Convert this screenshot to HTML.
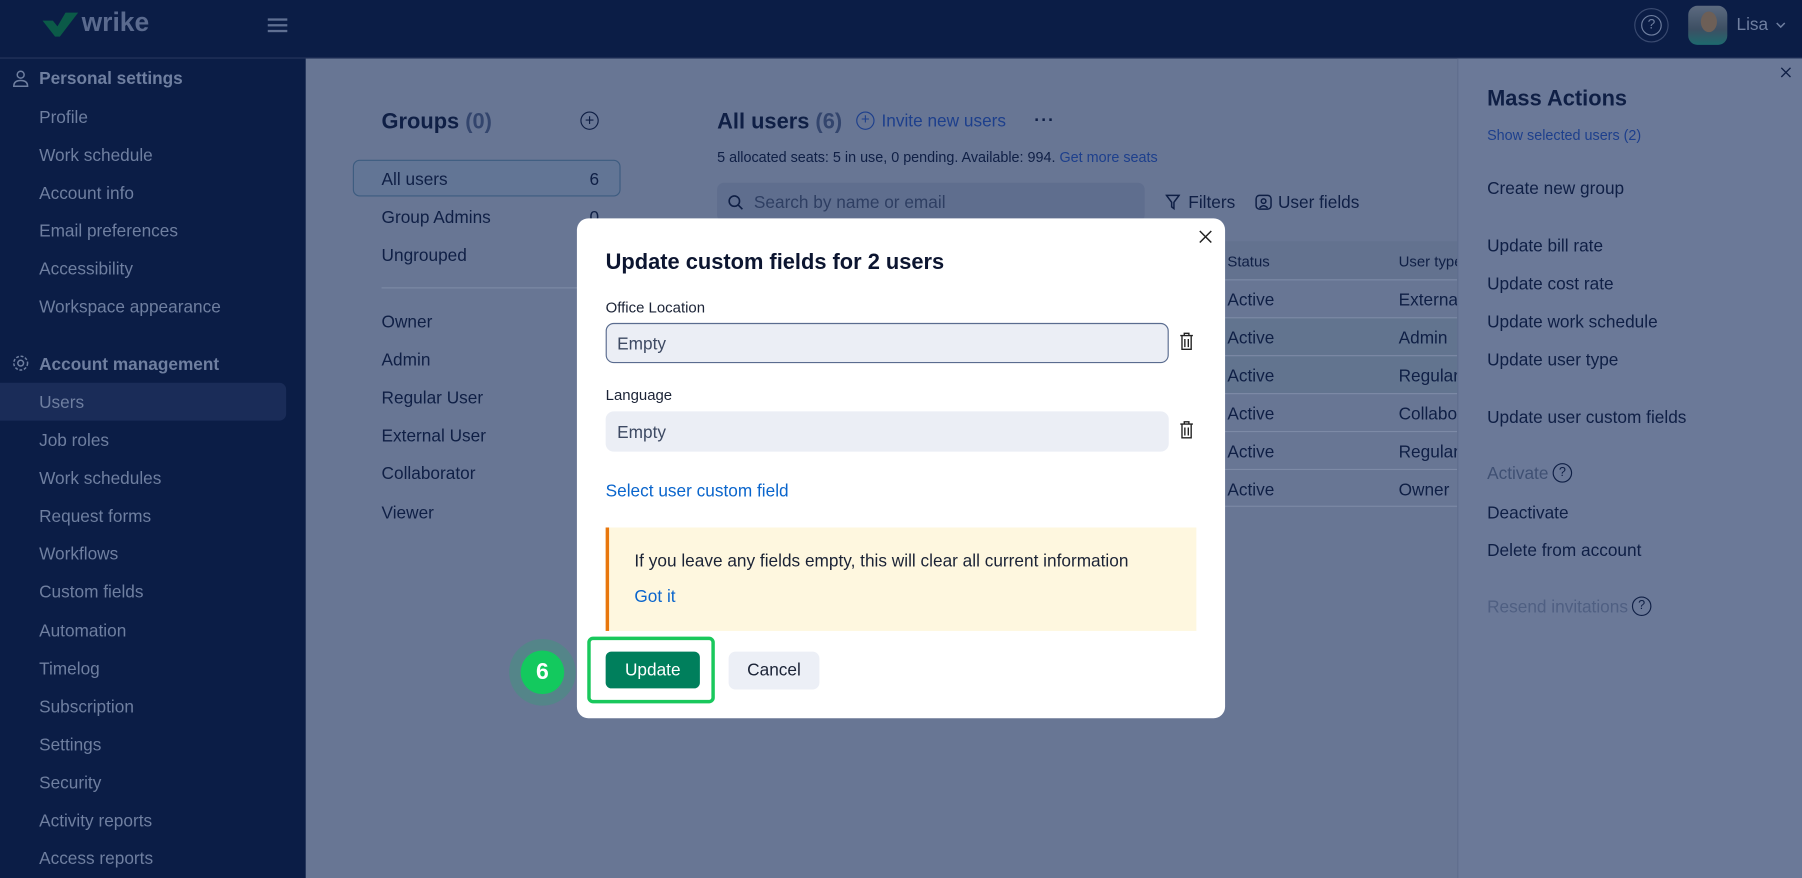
<!DOCTYPE html>
<html><head><meta charset="utf-8"><style>
*{margin:0;padding:0;box-sizing:border-box}
html,body{width:1802px;height:878px;overflow:hidden;background:#0b1d46}
#w{position:absolute;left:0;top:0;width:1568px;height:764px;transform:scale(1.14923);transform-origin:0 0;font-family:"Liberation Sans",sans-serif;background:#0b1d46;overflow:hidden}
.a{position:absolute;white-space:nowrap}
.sb{color:#6f7fa0;font-size:15px}
.m{color:#0f1f45;font-size:15px}
.lnk{color:#1d3f8c}
.row{position:absolute;left:1060px;width:208px;height:33px;border-top:1px solid #7d8aa6}
</style></head><body><div id="w">
<div class="a" style="left:0;top:0;width:1568px;height:51px;background:#0b1d46;border-bottom:1px solid #27375d"></div>
<svg class="a" style="left:37px;top:10px" width="32" height="22" viewBox="0 0 32 22"><path d="M0 8 L9 8 L13 13 L20 1 L31 1 L15 22 L11 22 Z" fill="#0b5a48"/></svg>
<div class="a" style="left:71px;top:6px;font-size:23px;font-weight:bold;color:#5a6a8e">wrike</div>
<div class="a" style="left:233px;top:16px;width:17px;height:2px;background:#5f6f92;box-shadow:0 5px 0 #5f6f92,0 10px 0 #5f6f92"></div>
<div class="a" style="left:1422px;top:7px;width:30px;height:30px;border:1px solid #3a4a70;border-radius:50%"></div>
<div class="a" style="left:1428px;top:13px;width:18px;height:18px;border:1.5px solid #6f7fa0;border-radius:50%;color:#6f7fa0;font-size:12px;text-align:center;line-height:15px">?</div>
<div class="a" style="left:1469px;top:5px;width:34px;height:34px;border-radius:8px;background:linear-gradient(#5c6a80,#3d4f63 60%,#1e6a6e)"></div>
<div class="a" style="left:1480px;top:10px;width:14px;height:18px;border-radius:50%;background:#6d5f57"></div>
<div class="a" style="left:1511px;top:13px;font-size:15px;color:#6f7fa0">Lisa</div>
<svg class="a" style="left:1545px;top:19px" width="9" height="6" viewBox="0 0 9 6" fill="none" stroke="#6f7fa0" stroke-width="1.3"><path d="M1 1l3.5 3.5L8 1"/></svg>
<div class="a" style="left:0;top:333px;width:249px;height:33px;background:#1a2c58;border-radius:0 6px 6px 0"></div>
<svg class="a" style="left:10px;top:60px" width="16" height="16" viewBox="0 0 16 16" fill="none" stroke="#6f7fa0" stroke-width="1.3"><circle cx="8" cy="5" r="3"/><path d="M2 15 Q2 10 8 10 Q14 10 14 15 Z"/></svg>
<div class="a sb" style="left:34px;top:60px;font-weight:bold">Personal settings</div>
<svg class="a" style="left:10px;top:308px" width="16" height="16" viewBox="0 0 16 16" fill="none" stroke="#6f7fa0" stroke-width="1.3"><circle cx="8" cy="8" r="2.5"/><circle cx="8" cy="8" r="6" stroke-dasharray="2.5 1.5"/></svg>
<div class="a sb" style="left:34px;top:309px;font-weight:bold">Account management</div>
<div class="a sb" style="left:34px;top:94px">Profile</div>
<div class="a sb" style="left:34px;top:127px">Work schedule</div>
<div class="a sb" style="left:34px;top:160px">Account info</div>
<div class="a sb" style="left:34px;top:193px">Email preferences</div>
<div class="a sb" style="left:34px;top:226px">Accessibility</div>
<div class="a sb" style="left:34px;top:259px">Workspace appearance</div>
<div class="a sb" style="left:34px;top:342px">Users</div>
<div class="a sb" style="left:34px;top:375px">Job roles</div>
<div class="a sb" style="left:34px;top:408px">Work schedules</div>
<div class="a sb" style="left:34px;top:441px">Request forms</div>
<div class="a sb" style="left:34px;top:474px">Workflows</div>
<div class="a sb" style="left:34px;top:507px">Custom fields</div>
<div class="a sb" style="left:34px;top:541px">Automation</div>
<div class="a sb" style="left:34px;top:574px">Timelog</div>
<div class="a sb" style="left:34px;top:607px">Subscription</div>
<div class="a sb" style="left:34px;top:640px">Settings</div>
<div class="a sb" style="left:34px;top:673px">Security</div>
<div class="a sb" style="left:34px;top:706px">Activity reports</div>
<div class="a sb" style="left:34px;top:739px">Access reports</div>
<div class="a" style="left:266px;top:51px;width:1302px;height:713px;background:#687694"></div>
<div class="a m" style="left:332px;top:96px;font-size:19px;font-weight:bold">Groups <span style="color:#33456d">(0)</span></div>
<div class="a" style="left:505px;top:97px;width:16px;height:16px;border:1.5px solid #0f1f45;border-radius:50%;font-size:14px;line-height:12px;text-align:center;color:#0f1f45">+</div>
<div class="a" style="left:307px;top:139px;width:233px;height:32px;border:1px solid #3d5c80;border-radius:6px;background:#627595"></div>
<div class="a m" style="left:332px;top:148px">All users</div><div class="a m" style="left:513px;top:148px">6</div>
<div class="a m" style="left:332px;top:181px">Group Admins</div><div class="a m" style="left:513px;top:181px">0</div>
<div class="a m" style="left:332px;top:214px">Ungrouped</div>
<div class="a" style="left:332px;top:250px;width:190px;height:1px;background:#7d8aa6"></div>
<div class="a m" style="left:332px;top:272px">Owner</div>
<div class="a m" style="left:332px;top:305px">Admin</div>
<div class="a m" style="left:332px;top:338px">Regular User</div>
<div class="a m" style="left:332px;top:371px">External User</div>
<div class="a m" style="left:332px;top:404px">Collaborator</div>
<div class="a m" style="left:332px;top:438px">Viewer</div>
<div class="a m" style="left:624px;top:96px;font-size:19px;font-weight:bold">All users <span style="color:#33456d">(6)</span></div>
<div class="a" style="left:745px;top:97px;width:16px;height:16px;border:1.5px solid #1d3f8c;border-radius:50%;font-size:13px;line-height:12px;text-align:center;color:#1d3f8c">+</div>
<div class="a m lnk" style="left:767px;top:97px">Invite new users</div>
<div class="a m" style="left:900px;top:96px;font-weight:bold;letter-spacing:1px">···</div>
<div class="a m" style="left:624px;top:130px;font-size:12.5px">5 allocated seats: 5 in use, 0 pending. Available: 994. <span class="lnk">Get more seats</span></div>
<div class="a" style="left:624px;top:159px;width:372px;height:34px;background:#5f6e8e;border-radius:6px"></div>
<svg class="a" style="left:633px;top:169px" width="14" height="14" viewBox="0 0 14 14" fill="none" stroke="#0f1f45" stroke-width="1.4"><circle cx="6" cy="6" r="4.5"/><path d="M9.5 9.5L13 13"/></svg>
<div class="a" style="left:656px;top:168px;font-size:15px;color:#2e3e62">Search by name or email</div>
<svg class="a" style="left:1014px;top:169px" width="13" height="14" viewBox="0 0 13 14" fill="none" stroke="#0f1f45" stroke-width="1.3"><path d="M1 1h11L7.5 7v5.5L5.5 11V7Z"/></svg>
<div class="a m" style="left:1034px;top:168px">Filters</div>
<svg class="a" style="left:1092px;top:169px" width="15" height="14" viewBox="0 0 15 14" fill="none" stroke="#0f1f45" stroke-width="1.3"><rect x="1" y="1" width="13" height="12" rx="3"/><circle cx="7.5" cy="6" r="2"/><path d="M4 12q3.5-4 7 0"/></svg>
<div class="a m" style="left:1112px;top:168px">User fields</div>
<div class="a" style="left:1060px;top:210px;width:208px;height:33px;background:#63728f"></div>
<div class="a m" style="left:1068px;top:220px;font-size:13px">Status</div><div class="a m" style="left:1217px;top:220px;font-size:13px">User type</div>
<div class="row" style="top:243px"></div><div class="row" style="top:276px;background:#62748f"></div><div class="row" style="top:309px;background:#62748f"></div><div class="row" style="top:342px"></div><div class="row" style="top:375px"></div><div class="row" style="top:408px;border-bottom:1px solid #7d8aa6"></div>
<div class="a m" style="left:1068px;top:253px">Active</div><div class="a m" style="left:1217px;top:253px">External</div>
<div class="a m" style="left:1068px;top:286px">Active</div><div class="a m" style="left:1217px;top:286px">Admin</div>
<div class="a m" style="left:1068px;top:319px">Active</div><div class="a m" style="left:1217px;top:319px">Regular</div>
<div class="a m" style="left:1068px;top:352px">Active</div><div class="a m" style="left:1217px;top:352px">Collabo</div>
<div class="a m" style="left:1068px;top:385px">Active</div><div class="a m" style="left:1217px;top:385px">Regular</div>
<div class="a m" style="left:1068px;top:418px">Active</div><div class="a m" style="left:1217px;top:418px">Owner</div>
<div class="a" style="left:1268px;top:51px;width:300px;height:713px;background:#6b7998;border-left:1px solid #5f6d8c"></div>
<svg class="a" style="left:1549px;top:58px" width="10" height="10" viewBox="0 0 10 10" stroke="#0f1f45" stroke-width="1.2"><path d="M1 1l8 8M9 1l-8 8"/></svg>
<div class="a m" style="left:1294px;top:76px;font-size:19px;font-weight:bold">Mass Actions</div>
<div class="a lnk" style="left:1294px;top:111px;font-size:12.5px">Show selected users (2)</div>
<div class="a m" style="left:1294px;top:156px">Create new group</div>
<div class="a m" style="left:1294px;top:206px">Update bill rate</div>
<div class="a m" style="left:1294px;top:239px">Update cost rate</div>
<div class="a m" style="left:1294px;top:272px">Update work schedule</div>
<div class="a m" style="left:1294px;top:305px">Update user type</div>
<div class="a m" style="left:1294px;top:355px">Update user custom fields</div>
<div class="a" style="left:1294px;top:404px;font-size:15px;color:#3f5073">Activate</div>
<div class="a" style="left:1351px;top:403px;width:17px;height:17px;border:1.3px solid #0f1f45;border-radius:50%;font-size:11px;text-align:center;line-height:15px;color:#0f1f45">?</div>
<div class="a m" style="left:1294px;top:438px">Deactivate</div>
<div class="a m" style="left:1294px;top:471px">Delete from account</div>
<div class="a" style="left:1294px;top:520px;font-size:15px;color:#4f5f82">Resend invitations</div>
<div class="a" style="left:1420px;top:519px;width:17px;height:17px;border:1.3px solid #0f1f45;border-radius:50%;font-size:11px;text-align:center;line-height:15px;color:#0f1f45">?</div>
<div class="a" style="left:502px;top:190px;width:564px;height:435px;background:#fff;border-radius:10px"></div>
<svg class="a" style="left:1043px;top:200px" width="12" height="12" viewBox="0 0 12 12" stroke="#222" stroke-width="1.3"><path d="M1 1l10 10M11 1L1 11"/></svg>
<div class="a" style="left:527px;top:218px;font-size:19px;font-weight:bold;color:#0c1530">Update custom fields for 2 users</div>
<div class="a" style="left:527px;top:260px;font-size:13px;color:#1b2336">Office Location</div>
<div class="a" style="left:527px;top:281px;width:490px;height:35px;background:#ebeef5;border:1px solid #5a6c8f;border-radius:7px"></div>
<div class="a" style="left:537px;top:291px;font-size:15px;color:#3e4a63">Empty</div>
<div class="a" style="left:527px;top:336px;font-size:13px;color:#1b2336">Language</div>
<div class="a" style="left:527px;top:358px;width:490px;height:35px;background:#ebeef5;border-radius:7px"></div>
<div class="a" style="left:537px;top:368px;font-size:15px;color:#3e4a63">Empty</div>
<svg class="a" style="left:1026px;top:289px" width="13" height="16" viewBox="0 0 13 16" fill="none" stroke="#222" stroke-width="1.2"><path d="M1 3h11M4.5 3V1h4v2M2.5 3v12h8V3M5 6v7M8 6v7"/></svg>
<svg class="a" style="left:1026px;top:366px" width="13" height="16" viewBox="0 0 13 16" fill="none" stroke="#222" stroke-width="1.2"><path d="M1 3h11M4.5 3V1h4v2M2.5 3v12h8V3M5 6v7M8 6v7"/></svg>
<div class="a" style="left:527px;top:419px;font-size:15px;color:#0a65cc">Select user custom field</div>
<div class="a" style="left:527px;top:459px;width:514px;height:90px;background:#fef7df;border-left:3px solid #e8760c"></div>
<div class="a" style="left:552px;top:480px;font-size:15px;color:#1b2336">If you leave any fields empty, this will clear all current information</div>
<div class="a" style="left:552px;top:511px;font-size:15px;color:#0a65cc">Got it</div>
<div class="a" style="left:511px;top:554px;width:111px;height:58px;border:3px solid #19c85c;border-radius:5px"></div>
<div class="a" style="left:527px;top:567px;width:82px;height:32px;background:#007f5c;border-radius:5px;color:#fff;font-size:15px;text-align:center;line-height:33px">Update</div>
<div class="a" style="left:634px;top:567px;width:79px;height:33px;background:#eceff6;border-radius:6px;color:#1b2336;font-size:15px;text-align:center;line-height:34px">Cancel</div>
<div class="a" style="left:443px;top:556px;width:58px;height:58px;border-radius:50%;background:#4f8a86;opacity:.8"></div>
<div class="a" style="left:453px;top:566px;width:38px;height:38px;border-radius:50%;background:#13c95e;color:#fff;font-weight:bold;font-size:20px;text-align:center;line-height:39px">6</div>
</div></body></html>
